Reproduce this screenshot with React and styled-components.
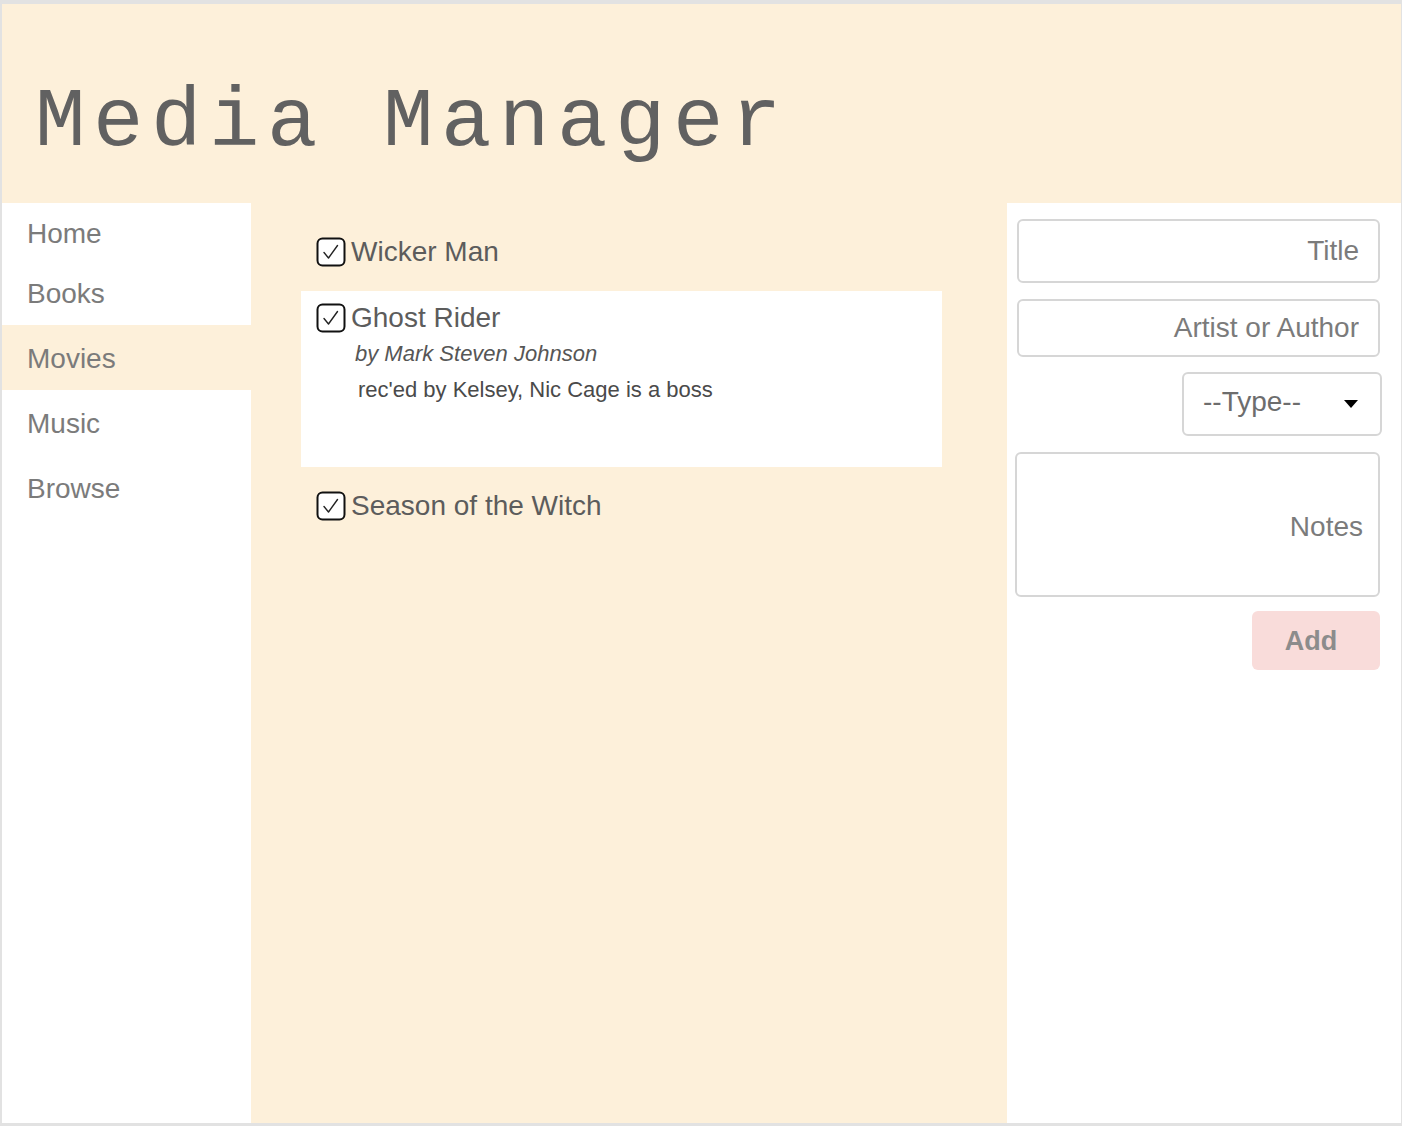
import React from "react";
import styled, { createGlobalStyle } from "styled-components";

const CREAM = "#fdf0da";

const GlobalStyle = createGlobalStyle`
  html, body { margin: 0; padding: 0; background: #e4e4e4; }
  body { font-family: "Liberation Sans", Arial, sans-serif; }
  * { box-sizing: border-box; }
`;

const Frame = styled.div`
  width: 1402px;
  height: 1126px;
  border-style: solid;
  border-color: #e2e2e2;
  border-width: 4px 1px 3px 2px;
  display: grid;
  grid-template-rows: 199px 1fr;
  background: #fff;
`;

const Header = styled.header`
  background: ${CREAM};
  padding: 77px 0 0 33px;
`;

const AppTitle = styled.h1`
  margin: 0;
  font-family: "Liberation Mono", "Courier New", monospace;
  font-weight: normal;
  font-size: 84px;
  line-height: 84px;
  letter-spacing: 7.6px;
  color: #616161;
`;

const Body = styled.div`
  display: grid;
  grid-template-columns: 249px 756px 1fr;
  min-height: 0;
`;

const Nav = styled.nav`
  background: #fff;
  display: flex;
  flex-direction: column;
`;

const NavItem = styled.a`
  display: flex;
  align-items: center;
  height: 65px;
  padding: 2px 0 0 25px;
  font-size: 28px;
  color: #7b7b7b;
  text-decoration: none;
  background: ${(p) => (p.$active ? CREAM : "#fff")};
  &:first-child { height: 57px; padding-top: 4px; }
`;

const Main = styled.main`
  background: ${CREAM};
  padding: 22px 65px 0 50px;
  display: flex;
  flex-direction: column;
  gap: 12px;
`;

const Item = styled.div`
  background: ${(p) => (p.$open ? "#fff" : "transparent")};
  padding: 12px 15px;
  min-height: ${(p) => (p.$open ? "176px" : "auto")};
`;

const TitleRow = styled.div`
  display: flex;
  align-items: center;
  gap: 5px;
  height: 30px;
`;

const ItemTitle = styled.span`
  font-size: 28px;
  line-height: 30px;
  color: #5c5c5c;
`;

const Details = styled.div`
  margin: 3px 0 0 39px;
`;

const ByLine = styled.div`
  font-size: 22px;
  line-height: 36px;
  font-style: italic;
  color: #565656;
`;

const Notes = styled.div`
  font-size: 22px;
  line-height: 36px;
  padding-left: 3px;
  color: #4a4a4a;
`;

const Side = styled.aside`
  background: #fff;
  padding: 16px 21px 0 10px;
`;

const Form = styled.form`
  display: flex;
  flex-direction: column;
  gap: 16px;
`;

const TextInput = styled.input`
  height: ${(p) => p.$h}px;
  width: 100%;
  border: 2px solid #d6d6d6;
  border-radius: 6px;
  padding: 0 19px;
  font-family: "Liberation Sans", Arial, sans-serif;
  font-size: 28px;
  text-align: right;
  color: #444;
  background: #fff;
  outline: none;
  &::placeholder { color: #7b7b7b; }
`;

const SelectWrap = styled.div`
  position: relative;
  align-self: flex-end;
  width: 200px;
  height: 64px;
  margin: -1px -2px 0 0;
`;

const Select = styled.select`
  appearance: none;
  -webkit-appearance: none;
  width: 100%;
  height: 100%;
  border: 2px solid #d6d6d6;
  border-radius: 6px;
  padding: 0 0 5px 19px;
  background: #fff;
  font-family: "Liberation Sans", Arial, sans-serif;
  font-size: 28px;
  color: #6d6d6d;
  outline: none;
`;

const Arrow = styled.svg`
  position: absolute;
  right: 24px;
  top: 28px;
  pointer-events: none;
`;

const Notesbox = styled.textarea`
  height: 145px;
  width: calc(100% + 2px);
  margin-left: -2px;
  border: 2px solid #d6d6d6;
  border-radius: 6px;
  padding: 57px 15px 0;
  font-family: "Liberation Sans", Arial, sans-serif;
  font-size: 28px;
  line-height: 32px;
  text-align: right;
  resize: none;
  outline: none;
  &::placeholder { color: #7b7b7b; }
`;

const AddButton = styled.button`
  align-self: flex-end;
  width: 128px;
  height: 59px;
  margin-top: -2px;
  padding: 2px 10px 0 0;
  border: none;
  border-radius: 6px;
  background: #f9dcda;
  color: #8c8c8c;
  font-family: "Liberation Sans", Arial, sans-serif;
  font-weight: bold;
  font-size: 27px;
`;

const Check = () => (
  <svg width="30" height="30" viewBox="0 0 30 30">
    <rect x="1.5" y="1.5" width="27" height="27" rx="5" fill="#fff" stroke="#111" strokeWidth="2" />
    <polyline points="8,15.5 12.5,21 21.5,8.5" fill="none" stroke="#222" strokeWidth="1.4" strokeLinecap="round" strokeLinejoin="round" />
  </svg>
);

const items = [
  { title: "Wicker Man" },
  { title: "Ghost Rider", by: "by Mark Steven Johnson", notes: "rec'ed by Kelsey, Nic Cage is a boss", open: true },
  { title: "Season of the Witch" },
];

export default function App() {
  return (
    <>
      <GlobalStyle />
      <Frame>
        <Header>
          <AppTitle>Media Manager</AppTitle>
        </Header>
        <Body>
          <Nav>
            <NavItem>Home</NavItem>
            <NavItem>Books</NavItem>
            <NavItem $active>Movies</NavItem>
            <NavItem>Music</NavItem>
            <NavItem>Browse</NavItem>
          </Nav>
          <Main>
            {items.map((it) => (
              <Item key={it.title} $open={it.open}>
                <TitleRow>
                  <Check />
                  <ItemTitle>{it.title}</ItemTitle>
                </TitleRow>
                {it.open && (
                  <Details>
                    <ByLine>{it.by}</ByLine>
                    <Notes>{it.notes}</Notes>
                  </Details>
                )}
              </Item>
            ))}
          </Main>
          <Side>
            <Form onSubmit={(e) => e.preventDefault()}>
              <TextInput $h={64} placeholder="Title" />
              <TextInput $h={58} placeholder="Artist or Author" />
              <SelectWrap>
                <Select defaultValue="">
                  <option value="">--Type--</option>
                  <option value="book">Book</option>
                  <option value="movie">Movie</option>
                  <option value="music">Music</option>
                </Select>
                <Arrow width="14" height="8" viewBox="0 0 14 8">
                  <polygon points="0,0 14,0 7,8" fill="#000" />
                </Arrow>
              </SelectWrap>
              <Notesbox placeholder="Notes" />
              <AddButton type="submit">Add</AddButton>
            </Form>
          </Side>
        </Body>
      </Frame>
    </>
  );
}
